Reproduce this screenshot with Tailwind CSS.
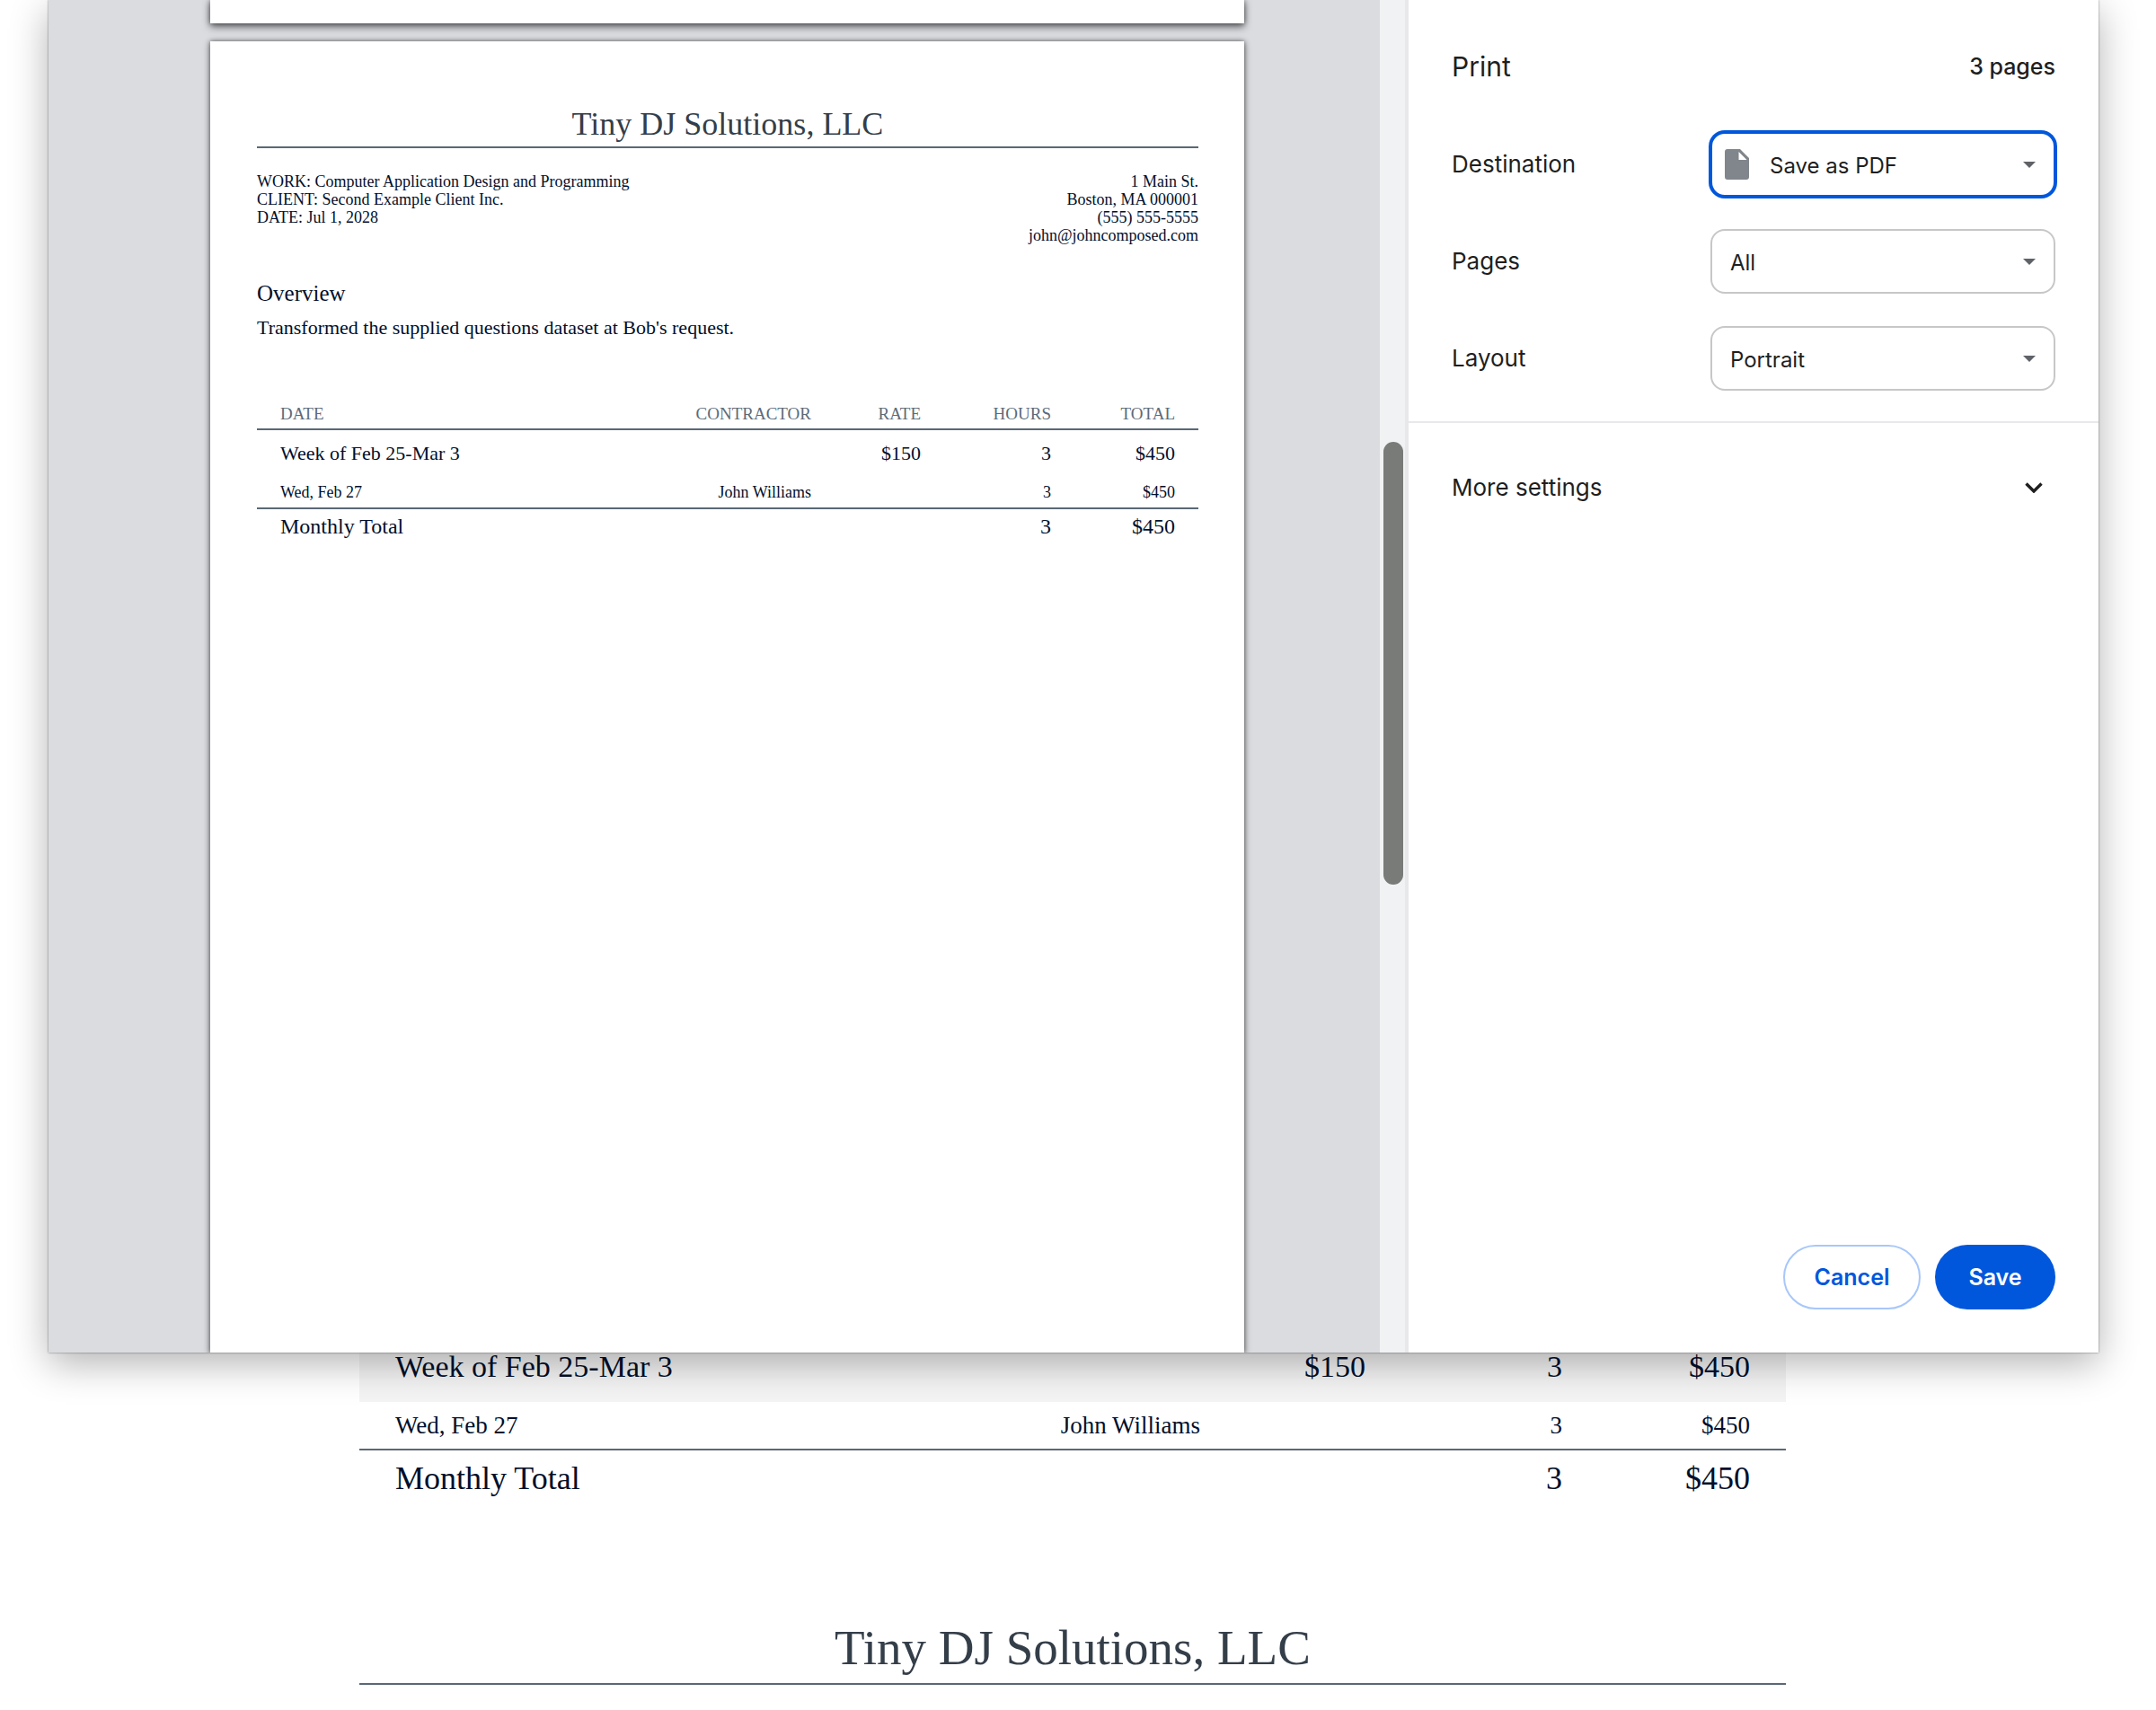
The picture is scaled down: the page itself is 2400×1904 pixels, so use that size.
<!DOCTYPE html>
<html lang="en">
<head>
  <meta charset="UTF-8" />
  <meta name="viewport" content="width=device-width, initial-scale=1.0" />
  <title>Invoice | Tiny DJ Solutions, LLC</title>
  <script src="https://cdn.jsdelivr.net/npm/@tailwindcss/browser@4"></script>
</head>
<body class="relative h-screen overflow-hidden bg-white font-['Liberation_Serif',serif] text-[#020f2b]">

  <!-- Invoice behind the dialog -->
  <main class="flex justify-center pt-[1481px] pr-3">
    <div class="w-full max-w-[1588px]">
      <table class="w-full table-fixed text-right">
        <colgroup>
          <col class="w-[440px]" />
          <col />
          <col class="w-[184px]" />
          <col class="w-[219px]" />
          <col class="w-[209px]" />
        </colgroup>
        <tbody>
          <tr class="bg-[#f4f4f4] text-[34px] leading-10">
            <td class="pt-[21px] pb-[19px] pl-10 text-left whitespace-nowrap">Week of Feb 25-Mar 3</td>
            <td></td>
            <td class="pt-[21px] pr-10 pb-[19px]">$150</td>
            <td class="pt-[21px] pr-10 pb-[19px]">3</td>
            <td class="pt-[21px] pr-10 pb-[19px]">$450</td>
          </tr>
          <tr class="border-b-2 border-[#5b6875] text-[27px] leading-9">
            <td class="py-2 pl-10 text-left">Wed, Feb 27</td>
            <td class="py-2 pr-10">John Williams</td>
            <td></td>
            <td class="py-2 pr-10">3</td>
            <td class="py-2 pr-10">$450</td>
          </tr>
          <tr class="text-[36px] leading-11">
            <td class="py-[9px] pl-10 text-left">Monthly Total</td>
            <td></td>
            <td></td>
            <td class="py-[9px] pr-10">3</td>
            <td class="py-[9px] pr-10">$450</td>
          </tr>
        </tbody>
      </table>
      <h1 class="mt-32 border-b-2 border-[#5b6875] pb-[9px] text-center text-[55px] leading-[60px] text-[#343e49]">Tiny DJ Solutions, LLC</h1>
    </div>
  </main>

  <!-- Print dialog -->
  <div role="dialog" aria-label="Print" class="absolute top-0 right-16 left-[54px] flex h-[1506px] shadow-[0_0_2px_rgba(0,0,0,0.5),0_12px_40px_rgba(0,0,0,0.3)]">

    <!-- Preview -->
    <section class="flex flex-1 flex-col items-center gap-5 overflow-hidden bg-[#dadce0] pl-[29px]">
      <div class="h-[26px] w-[1151px] shrink-0 bg-white shadow-[0_4px_8px_rgba(0,0,0,0.5),0_0_6px_rgba(0,0,0,0.5)]"></div>
      <article class="w-[1151px] flex-1 bg-white pt-[72px] pr-[51px] pl-[52px] shadow-[0_2px_8px_rgba(0,0,0,0.4),0_0_5px_rgba(0,0,0,0.5)]">
        <h2 class="border-b-2 border-[#5b6875] pb-[5px] text-center text-[36px] leading-10 text-[#343e49]">Tiny DJ Solutions, LLC</h2>
        <div class="mt-[27px] flex justify-between text-lg leading-5">
          <div>
            <p>WORK: Computer Application Design and Programming</p>
            <p>CLIENT: Second Example Client Inc.</p>
            <p>DATE: Jul 1, 2028</p>
          </div>
          <address class="text-right not-italic">
            1 Main St.<br />
            Boston, MA 000001<br />
            (555) 555-5555<br />
            john@johncomposed.com
          </address>
        </div>
        <h3 class="mt-[39px] text-[25px] leading-8">Overview</h3>
        <p class="mt-2 text-[22px] leading-7">Transformed the supplied questions dataset at Bob's request.</p>

        <table class="mt-[70px] w-full table-fixed text-right">
          <colgroup>
            <col class="w-[290px]" />
            <col />
            <col class="w-[122px]" />
            <col class="w-[145px]" />
            <col class="w-[138px]" />
          </colgroup>
          <thead>
            <tr class="border-b-2 border-[#5b6875] text-[19px] leading-6 text-[#5c6b7a]">
              <th class="pb-1 pl-[26px] text-left font-normal">DATE</th>
              <th class="pr-[26px] pb-1 font-normal">CONTRACTOR</th>
              <th class="pr-[26px] pb-1 font-normal">RATE</th>
              <th class="pr-[26px] pb-1 font-normal">HOURS</th>
              <th class="pr-[26px] pb-1 font-normal">TOTAL</th>
            </tr>
          </thead>
          <tbody>
            <tr class="text-[22px] leading-7">
              <td class="py-3 pl-[26px] text-left">Week of Feb 25-Mar 3</td>
              <td></td>
              <td class="py-3 pr-[26px]">$150</td>
              <td class="py-3 pr-[26px]">3</td>
              <td class="py-3 pr-[26px]">$450</td>
            </tr>
            <tr class="border-b-2 border-[#5b6875] text-lg leading-6">
              <td class="py-[5px] pl-[26px] text-left">Wed, Feb 27</td>
              <td class="py-[5px] pr-[26px]">John Williams</td>
              <td></td>
              <td class="py-[5px] pr-[26px]">3</td>
              <td class="py-[5px] pr-[26px]">$450</td>
            </tr>
            <tr class="text-2xl leading-7">
              <td class="py-[5px] pl-[26px] text-left">Monthly Total</td>
              <td></td>
              <td></td>
              <td class="py-[5px] pr-[26px]">3</td>
              <td class="py-[5px] pr-[26px]">$450</td>
            </tr>
          </tbody>
        </table>
      </article>
    </section>

    <!-- Scrollbar -->
    <div class="flex w-8 flex-col items-start border-r-4 border-[#e8e8eb] bg-[#f1f2f3] pt-[492px] pl-1">
      <div class="h-[493px] w-[22px] rounded-full bg-[#797b79]"></div>
    </div>

    <!-- Settings -->
    <form class="flex w-[768px] flex-col bg-white font-['Inter',sans-serif] text-[26px] leading-8 text-[#1f1f1f]">
      <div class="flex items-center justify-between px-12 pt-[58px]">
        <h2 class="text-[30px]">Print</h2>
        <span class="text-[25px] font-medium">3 pages</span>
      </div>

      <div class="mt-[57px] flex flex-col gap-9 border-b-2 border-[#e8e8ed] px-12 pb-[34px]">
        <div class="flex items-center justify-between">
          <label for="destination">Destination</label>
          <div class="relative w-96">
            <select id="destination" class="h-[72px] w-full appearance-none rounded-2xl border-2 border-[#0057dc] bg-white pt-1 pl-16 text-2xl ring-2 ring-[#0057dc] outline-none">
              <option>Save as PDF</option>
            </select>
            <svg class="pointer-events-none absolute top-[19px] left-4 h-[34px] w-[27px]" viewBox="0 0 27 34" fill="#80868b">
              <path fill-rule="evenodd" d="M3 0H17L27 10V31A3 3 0 0 1 24 34H3A3 3 0 0 1 0 31V3A3 3 0 0 1 3 0ZM15.500 3V12H24.500Z" />
            </svg>
            <svg class="pointer-events-none absolute top-[33px] right-[22px] h-[7px] w-[14px]" viewBox="0 0 14 7" fill="#5f6368"><path d="M0 0H14L7 7Z" /></svg>
          </div>
        </div>
        <div class="flex items-center justify-between">
          <label for="pages">Pages</label>
          <div class="relative w-96">
            <select id="pages" class="h-[72px] w-full appearance-none rounded-2xl border-2 border-[#c7c7c7] bg-white pt-1 pl-5 text-2xl">
              <option>All</option>
            </select>
            <svg class="pointer-events-none absolute top-[33px] right-[22px] h-[7px] w-[14px]" viewBox="0 0 14 7" fill="#5f6368"><path d="M0 0H14L7 7Z" /></svg>
          </div>
        </div>
        <div class="flex items-center justify-between">
          <label for="layout">Layout</label>
          <div class="relative w-96">
            <select id="layout" class="h-[72px] w-full appearance-none rounded-2xl border-2 border-[#c7c7c7] bg-white pt-1 pl-5 text-2xl">
              <option>Portrait</option>
            </select>
            <svg class="pointer-events-none absolute top-[33px] right-[22px] h-[7px] w-[14px]" viewBox="0 0 14 7" fill="#5f6368"><path d="M0 0H14L7 7Z" /></svg>
          </div>
        </div>
      </div>

      <button type="button" class="mt-14 flex items-center justify-between pr-[62px] pl-12">
        <span>More settings</span>
        <svg class="h-3 w-5" viewBox="0 0 20 12" fill="none" stroke="#1f1f1f" stroke-width="3.4"><path d="M1.5 1.5L10 10L18.5 1.5" /></svg>
      </button>

      <div class="mt-auto flex justify-end gap-4 px-12 pb-12 text-[25px] font-semibold">
        <button type="button" class="h-[72px] w-[153px] rounded-full border-2 border-[#a8c7fa] text-[#0057dc]">Cancel</button>
        <button type="submit" class="h-[72px] w-[134px] rounded-full bg-[#0057dc] text-white">Save</button>
      </div>
    </form>
  </div>

</body>
</html>
